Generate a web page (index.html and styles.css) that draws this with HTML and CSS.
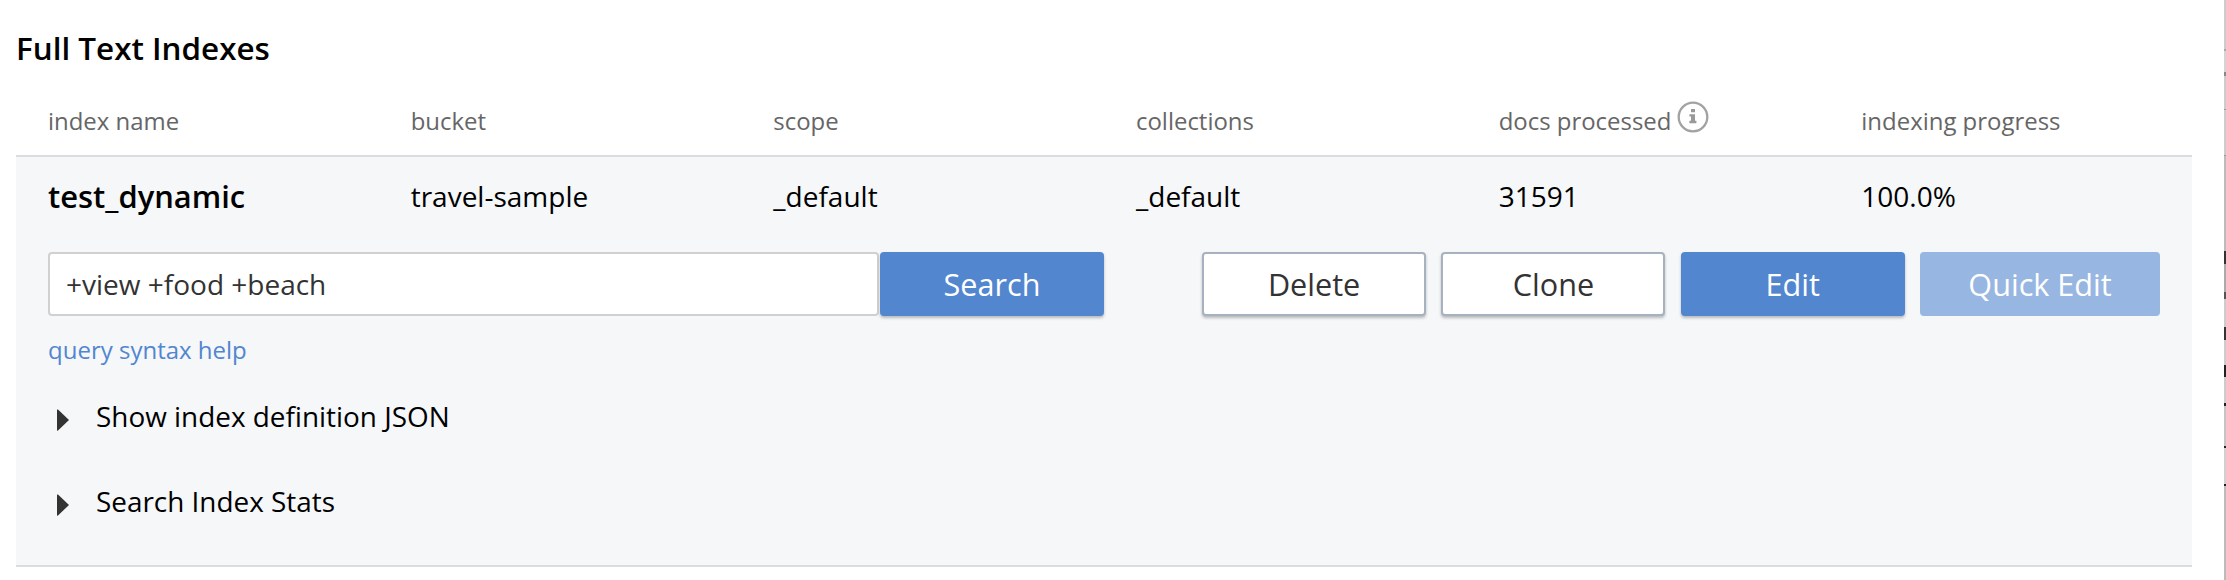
FILE: index.html
```html
<!DOCTYPE html>
<html lang="en">
<head>
<meta charset="utf-8">
<title>Full Text Indexes</title>
<link rel="stylesheet" href="styles.css">
</head>
<body>
<main class="panel">
  <h1 class="title">Full Text Indexes</h1>
  <div class="grid head">
    <span>index name</span>
    <span>bucket</span>
    <span>scope</span>
    <span>collections</span>
    <span class="with-icon">docs processed
      <svg class="info" viewBox="0 0 32 32"><circle cx="16" cy="16" r="14.3" fill="none" stroke="#a2a2a2" stroke-width="2.3"/><path fill="#999" d="M14 8h4v3.2h-4zM12.4 13.2h5.6v6.6h1.4v2.4h-7v-2.4h1.6v-4.2h-1.6z"/></svg>
    </span>
    <span>indexing progress</span>
  </div>
  <section class="index">
    <div class="grid row">
      <strong class="name">test_dynamic</strong>
      <span>travel-sample</span>
      <span>_default</span>
      <span>_default</span>
      <span>31591</span>
      <span>100.0%</span>
    </div>
    <div class="actions">
      <div class="search">
        <input class="query" type="text" value="+view +food +beach">
        <button class="btn primary">Search</button>
      </div>
      <div class="buttons">
        <button class="btn">Delete</button>
        <button class="btn">Clone</button>
        <button class="btn primary">Edit</button>
        <button class="btn primary disabled">Quick Edit</button>
      </div>
    </div>
    <a class="help">query syntax help</a>
    <div class="toggle"><svg class="caret" viewBox="0 0 12 22"><path d="M0 1Q0 0 1 .6L12 11 1 21.4Q0 22 0 21z"/></svg>Show index definition JSON</div>
    <div class="toggle"><svg class="caret" viewBox="0 0 12 22"><path d="M0 1Q0 0 1 .6L12 11 1 21.4Q0 22 0 21z"/></svg>Search Index Stats</div>
  </section>
</main>
<div class="edge"></div>
</body>
</html>
```
FILE: styles.css
```css
* { box-sizing: border-box; }
body {
  margin: 0;
  height: 580px;
  overflow: hidden;
  display: flex;
  justify-content: space-between;
  background: #fff;
  color: #000;
  font-family: "Open Sans", "Noto Sans", sans-serif;
  font-size: 28px;
}
.panel { width: 2192px; padding-left: 16px; }
.title {
  margin: 0;
  padding-top: 26px;
  height: 96px;
  font-size: 31.4px;
  line-height: 44px;
  font-weight: 600;
}
.grid {
  display: grid;
  grid-template-columns: repeat(6, 1fr);
}
.grid > * { padding-left: 32px; }
.head {
  height: 61px;
  border-bottom: 2px solid #dcdcdc;
  color: #666;
  font-size: 23.95px;
  line-height: 50px;
}
.with-icon { display: flex; gap: 6px; }
.info { width: 32px; height: 32px; margin-top: 5px; }
.index {
  height: 410px;
  background: #f5f7f9;
  border-bottom: 2px solid #dcdcdc;
}
.row {
  height: 95px;
  line-height: 78px;
}
.name { font-size: 30.9px; font-weight: 600; }
.actions {
  display: flex;
  justify-content: space-between;
  height: 64px;
  padding: 0 32px;
}
.search, .buttons { display: flex; }
.buttons { gap: 15.3px; }
.query {
  width: 831px;
  margin-right: 1px;
  padding: 0 16px;
  border: 2px solid #d0d0d0;
  border-radius: 4px;
  background: #fff;
  color: #333;
  font: inherit;
}
.btn {
  width: 224px;
  height: 64px;
  padding: 0;
  border: 2px solid #a6b2c0;
  border-radius: 4px;
  background: #fff;
  color: #333;
  font-family: inherit;
  font-size: 30.6px;
  box-shadow: 0 2px 3px rgba(0, 0, 0, 0.25);
}
.primary { border-color: #5286cf; background: #5286cf; color: #fff; }
.disabled { width: 240px; border-color: #97b6e2; background: #97b6e2; box-shadow: none; }
.help {
  display: block;
  padding-left: 32px;
  height: 59px;
  color: #5286cf;
  font-size: 24px;
  line-height: 68px;
}
.toggle {
  display: flex;
  height: 85px;
  padding-left: 41px;
  font-size: 27.9px;
  line-height: 82px;
}
.caret { width: 12px; height: 22px; margin: 34px 27px 0 0; fill: #333; }
.edge {
  width: 2px;
  height: 580px;
  background: linear-gradient(#ccc 0 49px, #aaa 49px 51px, #d4d4d4 51px 72px, #888 72px 76px, #ccc 76px 109px, #999 109px 110px, #ccc 110px 155px, #999 155px 156px, #bbb 156px 251px, #333 251px 264px, #aaa 264px 292px, #555 292px 299px, #ccc 299px 327px, #333 327px 340px, #ccc 340px 365px, #222 365px 377px, #ccc 377px 403px, #222 403px 406px, #c4c4c4 406px 446px, #222 446px 448px, #d0d0d0 448px 484px, #222 484px 486px, #bbb 486px);
}
```
